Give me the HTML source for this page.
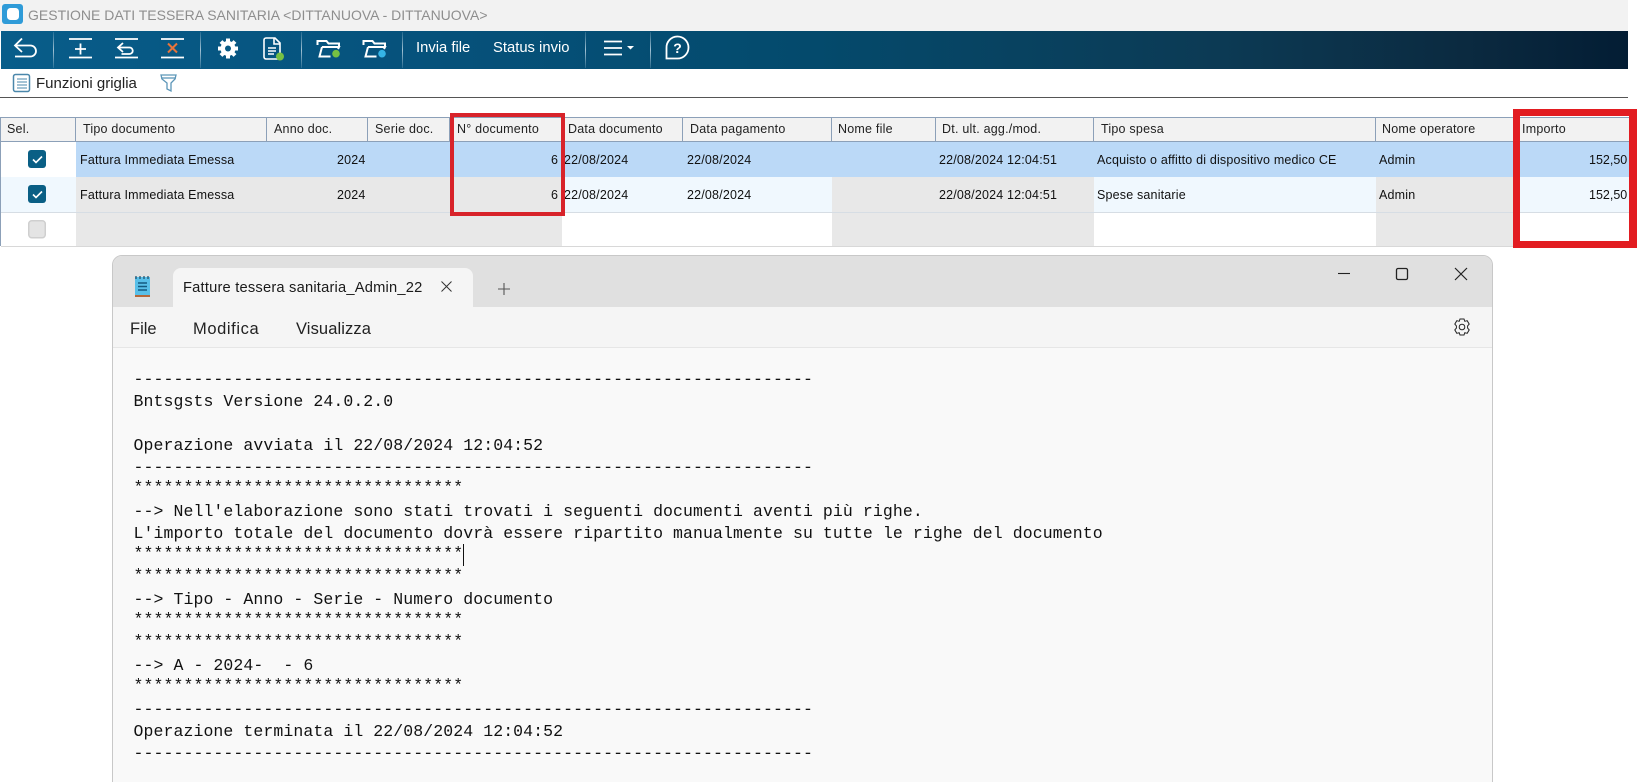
<!DOCTYPE html>
<html><head><meta charset="utf-8"><style>
html,body{margin:0;padding:0;background:#fff}
#p{position:relative;width:1637px;height:782px;overflow:hidden;background:#fff;font-family:"Liberation Sans",sans-serif}
#p div,#p span.a{position:absolute;white-space:pre}
.h{top:118px;height:23px;line-height:23px;font-size:12.5px;color:#222;letter-spacing:.22px;background:#f2f2f2;border-right:1px solid #8ca0b8;box-sizing:border-box;padding-left:6px}
.c{font-size:12.5px;color:#111;letter-spacing:.18px;height:20px;line-height:20px}
.m{left:133.500px;font-family:"Liberation Mono",monospace;font-size:16.5px;letter-spacing:.09px;color:#111;height:22px;line-height:22px}
.s{margin-top:-2px}
.t{font-size:14.800px;color:#fff;top:38px;line-height:20px}
.sep{top:32px;width:1px;height:36px;background:linear-gradient(180deg,rgba(160,195,215,.2),#9fc0d2 50%,rgba(160,195,215,.2))}
</style></head><body><div id="p">
<div style="left:0;top:0;width:1628px;height:31px;background:#f2f2f2"></div>
<svg style="position:absolute;left:2px;top:4px" width="21" height="21"><rect x="0" y="0" width="21" height="20" rx="3" fill="#2f9bd8"/><rect x="5" y="4" width="12" height="12" rx="3.5" fill="#fff"/></svg>
<div style="left:28px;top:5px;font-size:14px;line-height:20px;color:#8e8e8e">GESTIONE DATI TESSERA SANITARIA &lt;DITTANUOVA - DITTANUOVA&gt;</div>
<div style="left:1px;top:31px;width:1627px;height:38px;background:linear-gradient(90deg,#085d8a 0,#06527c 25%,#044a6c 50%,#0c3a54 75%,#0b2a40 90%,#031d34 100%)"></div>
<svg style="position:absolute;left:0;top:31px" width="720" height="38" fill="none" stroke="#fff" stroke-width="1.800">
<path d="M15 14.500h15.500a5.500 5.500 0 0 1 0 11H15M22 7.500l-7 7 7 6.500"/>
<path d="M69 8h23M69 26.500h23M80.500 12.500v11M75 18h11"/>
<path d="M115 8h23M115 26.500h23M123 12l-5 4.500 5 4.500M118 16.500h11.500a3.200 3.200 0 0 1 0 6.500h-8"/>
<path d="M161 8h23M161 26.500h23"/>
<path d="M168 12.500l9 9M177 12.500l-9 9" stroke="#e8743a" stroke-width="2"/>
<path d="M266 7h9l5 5v14a2 2 0 0 1-2 2h-12a2 2 0 0 1-2-2v-17a2 2 0 0 1 2-2zM274 7v6h6M268 17h8M268 20h8M268 23h6" stroke-width="1.600"/>
<path d="M317.500 14v-4h9l2 2.500h10.500v3M322 16h17l-1 2M322 16l-2.500 9.500h11" stroke-width="2"/>
<path d="M363.500 14v-4h9l2 2.500h10.500v3M368 16h17l-1 2M368 16l-2.500 9.500h11" stroke-width="2"/>
<path d="M604 10.500h18M604 17h18M604 23.500h18" stroke-width="1.800"/>
<path d="M666.500 27.500v-10.500a11 11 0 1 1 11 10.500z" stroke-width="1.800"/>
</svg>
<svg style="position:absolute;left:0;top:31px" width="720" height="38">
<path d="M228 7.500v20M218 17.500h20M221 10.500l14 14M235 10.500l-14 14" stroke="#fff" stroke-width="4"/>
<circle cx="228" cy="17.500" r="7.500" fill="#fff"/>
<circle cx="228" cy="17.500" r="3" fill="#075a85"/>
<circle cx="280" cy="25.500" r="4" fill="#76c043"/>
<circle cx="336" cy="22.700" r="3.800" fill="#76c043"/>
<circle cx="382" cy="22.700" r="3.800" fill="#35b4e6"/>
<path d="M627 15h7l-3.500 3.500z" fill="#fff"/>
<text x="677.500" y="22" font-family="Liberation Sans" font-size="14" font-weight="bold" fill="#fff" text-anchor="middle">?</text>
</svg>
<div class="sep" style="left:53px"></div><div class="sep" style="left:200px"></div><div class="sep" style="left:301px"></div><div class="sep" style="left:402px"></div><div class="sep" style="left:585px"></div><div class="sep" style="left:650px"></div>
<div class="t" style="left:416px">Invia file</div>
<div class="t" style="left:493px">Status invio</div>
<svg style="position:absolute;left:12px;top:73px" width="20" height="20" fill="none" stroke="#4a87ab" stroke-width="1.500"><rect x="1.500" y="1.500" width="16" height="17" rx="2"/><path d="M5 6h10M5 9h10M5 12h10M5 15h10" stroke-width="1"/></svg>
<div style="left:36px;top:74px;font-size:15px;line-height:20px;color:#222">Funzioni griglia</div>
<svg style="position:absolute;left:159px;top:72px" width="20" height="22" fill="none" stroke="#5c96b8" stroke-width="1.300"><path d="M2 3h15l-1 4-4 4v8l-4-2v-6L3 7z"/><path d="M2 6h15"/></svg>
<div style="left:0;top:97px;width:1628px;height:1px;background:#555"></div>

<!-- grid -->
<div style="left:0;top:117px;width:1629px;height:1px;background:#8ca0b8"></div>
<div style="left:0;top:141px;width:1629px;height:1px;background:#8ca0b8"></div>
<div style="left:0;top:117px;width:1px;height:129px;background:#8ca0b8"></div>
<div class="h" style="left:1px;width:75px">Sel.</div>
<div class="h" style="left:76px;width:191px;padding-left:7px">Tipo documento</div>
<div class="h" style="left:267px;width:101px;padding-left:7px">Anno doc.</div>
<div class="h" style="left:368px;width:82px;padding-left:7px">Serie doc.</div>
<div class="h" style="left:450px;width:112px;padding-left:7px">N° documento</div>
<div class="h" style="left:562px;width:121px;padding-left:6px">Data documento</div>
<div class="h" style="left:683px;width:149px;padding-left:7px">Data pagamento</div>
<div class="h" style="left:832px;width:104px;padding-left:6px">Nome file</div>
<div class="h" style="left:936px;width:158px;padding-left:6px">Dt. ult. agg./mod.</div>
<div class="h" style="left:1094px;width:282px;padding-left:7px">Tipo spesa</div>
<div class="h" style="left:1376px;width:141px;padding-left:6px">Nome operatore</div>
<div class="h" style="left:1517px;width:112px;padding-left:5px;border-right:0">Importo</div>

<div style="left:76px;top:142px;width:1553px;height:35px;background:#bbd9f7"></div>
<div style="left:1px;top:177px;width:1628px;height:35px;background:#f0f8fe"></div>
<div style="left:76px;top:177px;width:486px;height:35px;background:#e8e8e8"></div>
<div style="left:832px;top:177px;width:262px;height:35px;background:#e8e8e8"></div>
<div style="left:1376px;top:177px;width:141px;height:35px;background:#e8e8e8"></div>
<div style="left:76px;top:213px;width:486px;height:33px;background:#e8e8e8"></div>
<div style="left:832px;top:213px;width:262px;height:33px;background:#e8e8e8"></div>
<div style="left:1376px;top:213px;width:141px;height:33px;background:#e8e8e8"></div>
<div style="left:1px;top:212px;width:1628px;height:1px;background:#d6dde4"></div>
<div style="left:1px;top:246px;width:1628px;height:1px;background:#d8d8d8"></div>

<svg style="position:absolute;left:28px;top:150px" width="20" height="64"><rect x="0" y="0" width="18" height="18" rx="3" fill="#0a5f85"/><path d="M5 9.500l3 3 6-6" fill="none" stroke="#fff" stroke-width="1.600"/><rect x="0" y="35" width="18" height="18" rx="3" fill="#0a5f85"/><path d="M5 44.500l3 3 6-6" fill="none" stroke="#fff" stroke-width="1.600"/></svg>
<svg style="position:absolute;left:28px;top:220px" width="20" height="20"><rect x=".75" y=".75" width="16.500" height="17" rx="3" fill="#e4e4e4" stroke="#cfcfcf" stroke-width="1.500"/></svg>

<div class="c" style="left:80px;top:150px">Fattura Immediata Emessa</div>
<div class="c" style="left:337px;top:150px">2024</div>
<div class="c" style="left:551px;top:150px">6</div>
<div class="c" style="left:564px;top:150px">22/08/2024</div>
<div class="c" style="left:687px;top:150px">22/08/2024</div>
<div class="c" style="left:939px;top:150px">22/08/2024 12:04:51</div>
<div class="c" style="left:1097px;top:150px">Acquisto o affitto di dispositivo medico CE</div>
<div class="c" style="left:1379px;top:150px">Admin</div>
<div class="c" style="left:1589px;top:150px;letter-spacing:0">152,50</div>
<div class="c" style="left:80px;top:185px">Fattura Immediata Emessa</div>
<div class="c" style="left:337px;top:185px">2024</div>
<div class="c" style="left:551px;top:185px">6</div>
<div class="c" style="left:564px;top:185px">22/08/2024</div>
<div class="c" style="left:687px;top:185px">22/08/2024</div>
<div class="c" style="left:939px;top:185px">22/08/2024 12:04:51</div>
<div class="c" style="left:1097px;top:185px">Spese sanitarie</div>
<div class="c" style="left:1379px;top:185px">Admin</div>
<div class="c" style="left:1589px;top:185px;letter-spacing:0">152,50</div>

<div style="left:450px;top:113px;width:115px;height:103px;border:4px solid #d8232a;box-sizing:border-box"></div>
<div style="left:1513px;top:109px;width:124px;height:139px;border:7px solid #e21c21;border-right-width:8px;box-sizing:border-box"></div>

<!-- notepad -->
<div style="left:112px;top:255px;width:1381px;height:540px;background:#f9f9f9;border:1px solid #c8c8c8;border-radius:10px 10px 0 0;box-sizing:border-box;overflow:hidden">
<div style="left:0;top:0;width:1379px;height:51px;background:#e0e0e0"></div>
<div style="left:0;top:51px;width:1379px;height:40px;background:#f5f5f5;border-bottom:1px solid #e6e6e6"></div>
</div>
<div style="left:173px;top:268px;width:300px;height:39px;background:#f5f5f5;border-radius:8px 8px 0 0"></div>
<svg style="position:absolute;left:133px;top:276px" width="20" height="24"><rect x="2" y="1" width="15" height="18" fill="#58bfe8"/><path d="M5 7h9M5 10.500h9M5 14h9" stroke="#145a80" stroke-width="1.500"/><path d="M3 0v3M7 0v3M11 0v3M15 0v3" stroke="#1a4a66" stroke-width="1.200"/><rect x="2" y="19" width="15" height="2" fill="#b4683a"/></svg>
<div style="left:183px;top:278px;font-size:14.700px;line-height:20px;color:#1a1a1a;letter-spacing:.2px">Fatture tessera sanitaria_Admin_22</div>
<svg style="position:absolute;left:439px;top:279px" width="16" height="16" fill="none" stroke="#333" stroke-width="1"><path d="M2.500 2.500l10 10M12.500 2.500l-10 10"/></svg>
<svg style="position:absolute;left:496px;top:281px" width="16" height="16" fill="none" stroke="#555" stroke-width="1.100"><path d="M8 2v12M2 8h12"/></svg>
<svg style="position:absolute;left:1330px;top:265px" width="160" height="80" fill="none" stroke="#222"><path d="M8 8.500h12" stroke-width="1.100"/><rect x="66.500" y="3.500" width="11" height="11" rx="1.500" stroke-width="1.300"/><path d="M125 3l12 12M137 3l-12 12" stroke-width="1.200"/><g transform="translate(132,62)" stroke-width="1"><circle r="2.800"/><path d="M-2-8h4l.8 2.300 2.400-.6 2 3.400-1.600 1.800 0 2.200 1.600 1.800-2 3.400-2.400-.6-.8 2.300h-4l-.8-2.300-2.400.6-2-3.400 1.600-1.800 0-2.200-1.600-1.800 2-3.400 2.400.6z"/></g></svg>
<div style="left:130px;top:318px;font-size:16.500px;line-height:22px;color:#222">File</div>
<div style="left:193px;top:318px;font-size:16.500px;line-height:22px;color:#222;letter-spacing:.6px">Modifica</div>
<div style="left:296px;top:318px;font-size:16.500px;line-height:22px;color:#222;letter-spacing:.1px">Visualizza</div>

<div class="m" style="top:369px">--------------------------------------------------------------------</div>
<div class="m" style="top:391px">Bntsgsts Versione 24.0.2.0</div>
<div class="m" style="top:435px">Operazione avviata il 22/08/2024 12:04:52</div>
<div class="m" style="top:457px">--------------------------------------------------------------------</div>
<div class="m s" style="top:479px">*********************************</div>
<div class="m" style="top:501px">--&gt; Nell'elaborazione sono stati trovati i seguenti documenti aventi più righe.</div>
<div class="m" style="top:523px">L'importo totale del documento dovrà essere ripartito manualmente su tutte le righe del documento</div>
<div class="m s" style="top:545px">*********************************</div>
<div style="left:463px;top:544px;width:1px;height:22px;background:#111"></div>
<div class="m s" style="top:567px">*********************************</div>
<div class="m" style="top:589px">--&gt; Tipo - Anno - Serie - Numero documento</div>
<div class="m s" style="top:611px">*********************************</div>
<div class="m s" style="top:633px">*********************************</div>
<div class="m" style="top:655px">--&gt; A - 2024-  - 6</div>
<div class="m s" style="top:677px">*********************************</div>
<div class="m" style="top:699px">--------------------------------------------------------------------</div>
<div class="m" style="top:721px">Operazione terminata il 22/08/2024 12:04:52</div>
<div class="m" style="top:743px">--------------------------------------------------------------------</div>
</div></body></html>
